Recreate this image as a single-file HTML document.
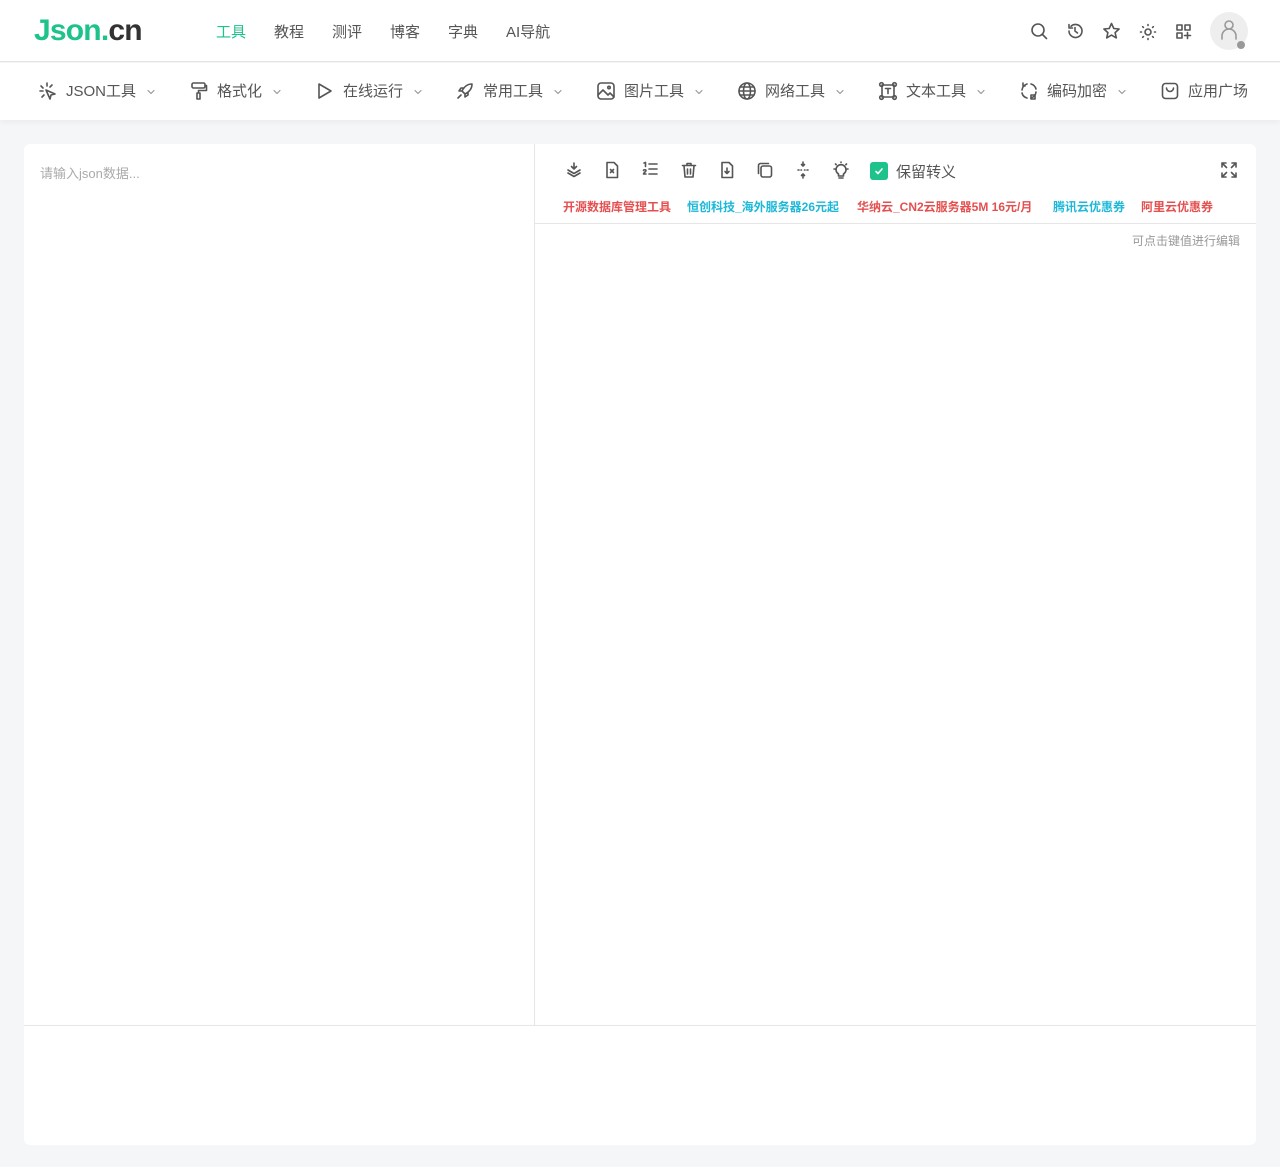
<!DOCTYPE html>
<html><head><meta charset="utf-8"><style>
*{box-sizing:border-box;margin:0;padding:0}
body{width:1280px;height:1167px;background:#f5f6f8;font-family:"Liberation Sans","Noto Sans CJK SC",sans-serif;position:relative;overflow:hidden;color:#555}
.hdr{position:absolute;left:0;top:0;width:1280px;height:62px;background:#fff;border-bottom:1px solid #e5e5e5}
.logo{position:absolute;left:34px;top:14px;font-size:30px;font-weight:bold;letter-spacing:-0.8px}
.top a{position:absolute;top:21px;font-size:15px;color:#555}
.sub{position:absolute;left:0;top:63px;width:1280px;height:57px;background:#fff;box-shadow:0 2px 6px rgba(0,0,0,.05)}
.ni{position:absolute;top:17px;font-size:15px;color:#555;display:flex;align-items:center;white-space:nowrap}
.ni svg{margin-right:8px}
.ni .ch{margin-left:10px;margin-top:2px}
.card{position:absolute;left:24px;top:144px;width:1232px;height:1001px;background:#fff;border-radius:6px}
.ico{position:absolute;top:17px}
.ad{position:absolute;top:54px;font-size:12px;font-weight:bold}
svg{fill:none;stroke:#555;stroke-width:1.6;stroke-linecap:round;stroke-linejoin:round}
</style></head><body>
<div class="hdr">
<div class="logo"><span style="color:#1ec28b">Json.</span><span style="color:#333">cn</span></div>
<div class="top"><a style="left:216px;color:#1ec28b">工具</a><a style="left:274px">教程</a><a style="left:332px">测评</a><a style="left:390px">博客</a><a style="left:448px">字典</a><a style="left:506px">AI导航</a></div>
<svg style="position:absolute;left:1030px;top:22px" width="18" height="18" viewBox="0 0 18 18"><circle cx="8" cy="8" r="6"/><path d="M12.5 12.5L16.5 16.5"/></svg>
<svg style="position:absolute;left:1066px;top:22px" width="18" height="18" viewBox="0 0 18 18"><path d="M3 9a6.5 6.5 0 1 0 2-4.7M3 2.5v3.5h3.5M9 5.5V9l2.5 2"/></svg>
<svg style="position:absolute;left:1102px;top:22px" width="19" height="18" viewBox="0 0 19 18"><path d="M9.5 1.5l2.3 5 5.3.5-4 3.6 1.2 5.3-4.8-2.8-4.8 2.8 1.2-5.3-4-3.6 5.3-.5z"/></svg>
<svg style="position:absolute;left:1139px;top:23px" width="18" height="18" viewBox="0 0 18 18"><circle cx="9" cy="9" r="3"/><path d="M9 1.5v1M9 15.5v1M1.5 9h1M15.5 9h1M3.7 3.7l.7.7M13.6 13.6l.7.7M3.7 14.3l.7-.7M13.6 4.4l.7-.7"/></svg>
<svg style="position:absolute;left:1175px;top:23px" width="18" height="18" viewBox="0 0 18 18"><rect x="2" y="2" width="5" height="5"/><rect x="10" y="2" width="5" height="5"/><rect x="2" y="10" width="5" height="5"/><path d="M12.5 9.5v6M9.5 12.5h6"/></svg>
<div style="position:absolute;left:1210px;top:12px;width:38px;height:38px;border-radius:50%;background:#eee"></div>
<svg style="position:absolute;left:1219px;top:19px" width="20" height="22" viewBox="0 0 20 22"><circle cx="10" cy="6" r="4" stroke="#999"/><path d="M3 20v-3a7 7 0 0 1 14 0v3" stroke="#999"/></svg>
<div style="position:absolute;left:1237px;top:41px;width:8px;height:8px;border-radius:50%;background:#999"></div>
</div>
<div class="sub">
<div class="ni" style="left:38px"><svg width="20" height="20" viewBox="0 0 20 20"><path d="M9 2v3M3 5l2 2M2 10h3M4 16l2-2M14 4l-2 2M8 9l9 4-4 1-1 4z"/></svg>JSON工具<svg class="ch" width="10" height="10" viewBox="0 0 10 10" style="stroke:#999;stroke-width:1.2"><path d="M2 3.5l3 3 3-3"/></svg></div>
<div class="ni" style="left:189px"><svg width="20" height="20" viewBox="0 0 20 20"><rect x="3" y="2" width="13" height="5" rx="1.5"/><path d="M16 4.5h1.5v5H9.5v2.5M8 12h3v6H8z"/></svg>格式化<svg class="ch" width="10" height="10" viewBox="0 0 10 10" style="stroke:#999;stroke-width:1.2"><path d="M2 3.5l3 3 3-3"/></svg></div>
<div class="ni" style="left:315px"><svg width="20" height="20" viewBox="0 0 20 20"><path d="M4 3l12 7-12 7z"/></svg>在线运行<svg class="ch" width="10" height="10" viewBox="0 0 10 10" style="stroke:#999;stroke-width:1.2"><path d="M2 3.5l3 3 3-3"/></svg></div>
<div class="ni" style="left:455px"><svg width="20" height="20" viewBox="0 0 20 20"><path d="M17 3c-5 0-8 3-10 7l3 3c4-2 7-5 7-10zM7 10H4l2-3h3M10 13v3l3-2v-3M6 14l-3 3"/></svg>常用工具<svg class="ch" width="10" height="10" viewBox="0 0 10 10" style="stroke:#999;stroke-width:1.2"><path d="M2 3.5l3 3 3-3"/></svg></div>
<div class="ni" style="left:596px"><svg width="20" height="20" viewBox="0 0 20 20"><rect x="2" y="2" width="16" height="16" rx="3"/><path d="M2 14l5-5 5 5 2-2 4 4"/><circle cx="13" cy="6.5" r="1.2"/></svg>图片工具<svg class="ch" width="10" height="10" viewBox="0 0 10 10" style="stroke:#999;stroke-width:1.2"><path d="M2 3.5l3 3 3-3"/></svg></div>
<div class="ni" style="left:737px"><svg width="20" height="20" viewBox="0 0 20 20"><circle cx="10" cy="10" r="8"/><ellipse cx="10" cy="10" rx="3.5" ry="8"/><path d="M2 10h16M3 6h14M3 14h14"/></svg>网络工具<svg class="ch" width="10" height="10" viewBox="0 0 10 10" style="stroke:#999;stroke-width:1.2"><path d="M2 3.5l3 3 3-3"/></svg></div>
<div class="ni" style="left:878px"><svg width="20" height="20" viewBox="0 0 20 20"><rect x="4" y="4" width="12" height="12"/><circle cx="3.5" cy="3.5" r="1.8"/><circle cx="16.5" cy="3.5" r="1.8"/><circle cx="3.5" cy="16.5" r="1.8"/><circle cx="16.5" cy="16.5" r="1.8"/><path d="M7.5 7.5h5M10 7.5v5"/></svg>文本工具<svg class="ch" width="10" height="10" viewBox="0 0 10 10" style="stroke:#999;stroke-width:1.2"><path d="M2 3.5l3 3 3-3"/></svg></div>
<div class="ni" style="left:1019px"><svg width="20" height="20" viewBox="0 0 20 20"><path d="M3 9a7 7 0 0 1 5-6M17 11a7 7 0 0 1-5 6M12 3a7 7 0 0 1 5 5M3 12a7 7 0 0 0 5 5"/><path d="M4 2v3h2M12 14h4v4h-4z"/></svg>编码加密<svg class="ch" width="10" height="10" viewBox="0 0 10 10" style="stroke:#999;stroke-width:1.2"><path d="M2 3.5l3 3 3-3"/></svg></div>
<div class="ni" style="left:1160px"><svg width="20" height="20" viewBox="0 0 20 20"><rect x="2.5" y="2.5" width="15" height="15" rx="3"/><path d="M6.5 7a3.5 3.5 0 0 0 7 0"/></svg>应用广场</div>
</div>
<div class="card">
<div style="position:absolute;left:16px;top:19px;font-size:13px;color:#aaa">请输入json数据...</div>
<div style="position:absolute;left:510px;top:0;width:1px;height:881px;background:#e6e6e6"></div>
<div style="position:absolute;left:0;top:881px;width:1232px;height:1px;background:#e6e6e6"></div>
<div style="position:absolute;left:511px;top:79px;width:721px;height:1px;background:#e6e6e6"></div>
<svg class="ico" style="left:541px" width="18" height="18" viewBox="0 0 18 18"><path d="M9 2v6M6.5 5.5L9 8l2.5-2.5M3 9l6 3.5 6-3.5M3 12l6 3.5 6-3.5"/></svg>
<svg class="ico" style="left:579px" width="18" height="18" viewBox="0 0 18 18"><path d="M4 1.5h7l3.5 3.5v11.5H4zM7.5 8.5l3 3M10.5 8.5l-3 3"/></svg>
<svg class="ico" style="left:617px" width="18" height="18" viewBox="0 0 18 18"><path d="M3 2l1.5-.5v4M2.5 9.5c0-1 2.5-1 2.5 0s-2.5 2.5-2.5 3.5H5M8 3h8M8 8h8M8 13h8"/></svg>
<svg class="ico" style="left:656px" width="18" height="18" viewBox="0 0 18 18"><path d="M2.5 4.5h13M7 4.5V2.5h4v2M4 4.5l1 11.5h8l1-11.5M7.5 8v5M10.5 8v5"/></svg>
<svg class="ico" style="left:694px" width="18" height="18" viewBox="0 0 18 18"><path d="M4 1.5h7l3.5 3.5v11.5H4zM9 7v5.5M7 10.5L9 12.5l2-2"/></svg>
<svg class="ico" style="left:732px" width="18" height="18" viewBox="0 0 18 18"><rect x="5" y="5" width="10.5" height="11" rx="2"/><path d="M12.5 2.5H4.5a2 2 0 0 0-2 2v8"/></svg>
<svg class="ico" style="left:770px" width="18" height="18" viewBox="0 0 18 18"><path d="M9 1v4M7.5 3.5L9 5l1.5-1.5M9 17v-4M7.5 14.5L9 13l1.5 1.5M4 9h1M13 9h1M7 9h.5M10.5 9h.5"/></svg>
<svg class="ico" style="left:808px" width="18" height="18" viewBox="0 0 18 18"><path d="M6.5 13a5 5 0 1 1 5 0v2h-5zM7 17h4M9 1v.5M2 8h1M15 8h1M3.5 3l.7.7M14.5 3l-.7.7"/></svg>
<div style="position:absolute;left:846px;top:18px;width:18px;height:18px;border-radius:3px;background:#1ec28b"></div>
<svg style="position:absolute;left:849px;top:21px;stroke:#fff;stroke-width:1.6" width="12" height="12" viewBox="0 0 12 12"><path d="M3 6.5l2 2 4-4.5"/></svg>
<div style="position:absolute;left:872px;top:17px;font-size:15px;color:#555">保留转义</div>
<svg class="ico" style="left:1196px" width="18" height="18" viewBox="0 0 18 18"><path d="M2 6V2h4M2 2l4.5 4.5M16 6V2h-4M16 2l-4.5 4.5M2 12v4h4M2 16l4.5-4.5M16 12v4h-4M16 16l-4.5-4.5"/></svg>
<div class="ad" style="left:539px;color:#e45050">开源数据库管理工具</div>
<div class="ad" style="left:663px;color:#1db8d8">恒创科技_海外服务器26元起</div>
<div class="ad" style="left:833px;color:#e45050">华纳云_CN2云服务器5M 16元/月</div>
<div class="ad" style="left:1029px;color:#1db8d8">腾讯云优惠券</div>
<div class="ad" style="left:1117px;color:#e45050">阿里云优惠券</div>
<div style="position:absolute;right:16px;top:88px;font-size:12px;color:#999">可点击键值进行编辑</div>
</div>
</body></html>
